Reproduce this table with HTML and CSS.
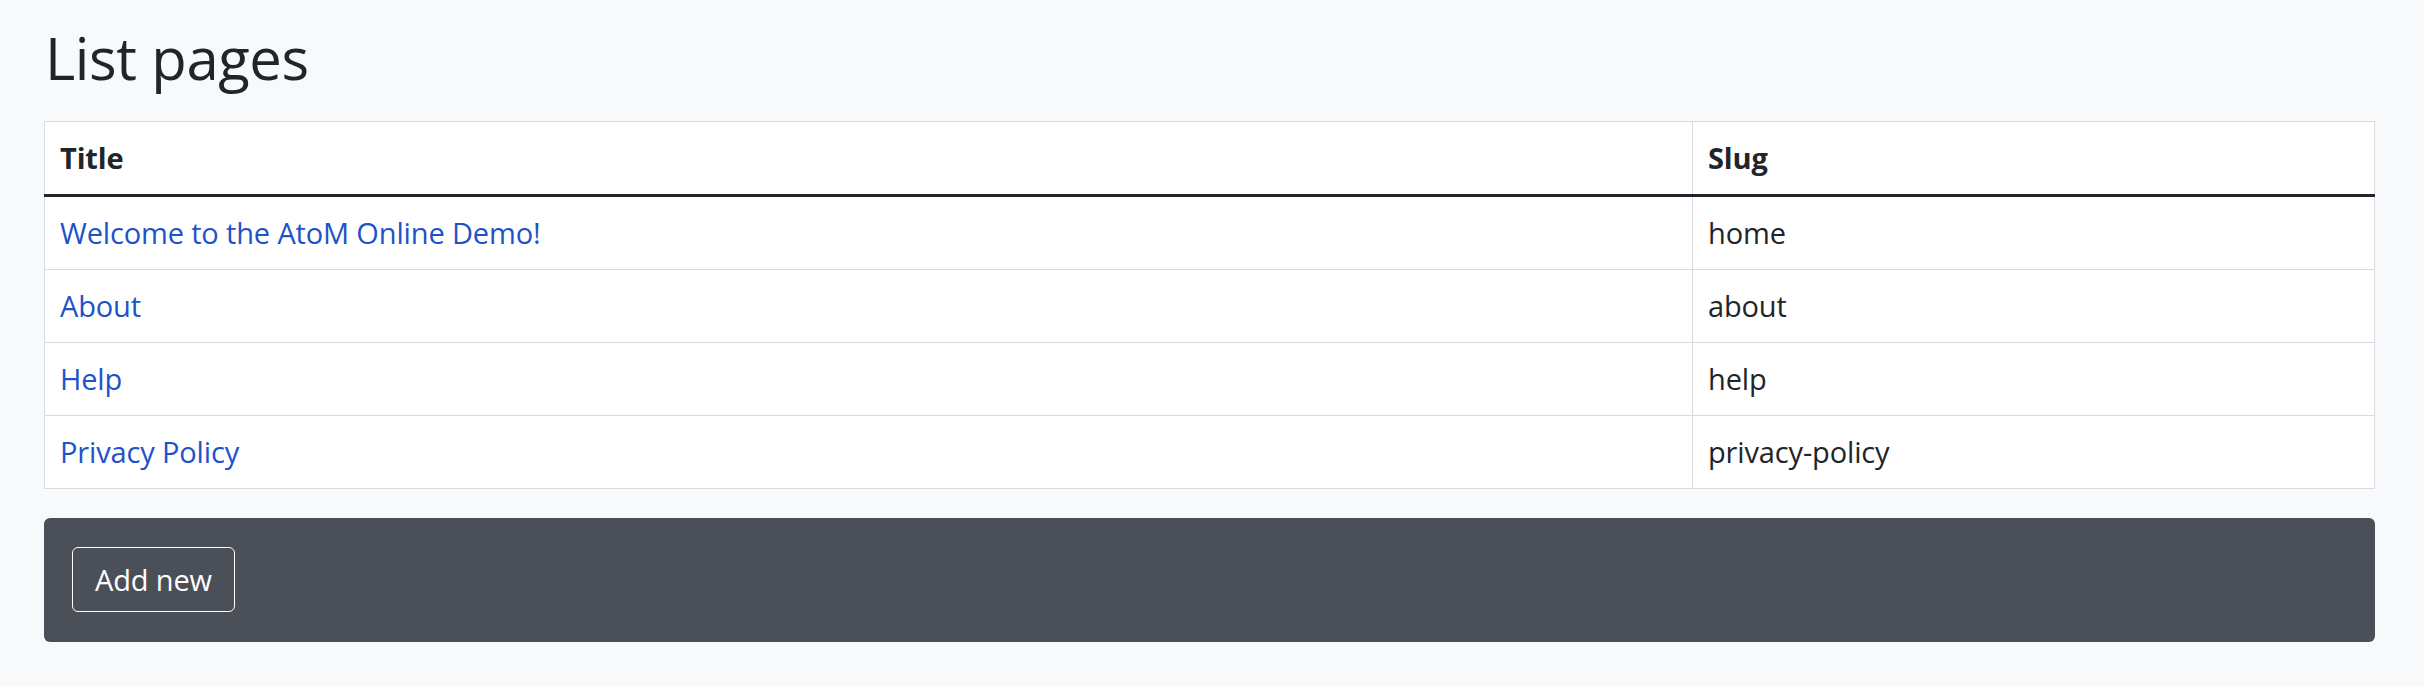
FILE: index.html
```html
<!DOCTYPE html>
<html lang="en">
<head>
<meta charset="utf-8">
<title>List pages</title>
<link rel="stylesheet" href="styles.css">
</head>
<body>
<main class="page">
  <h1 class="page-title">List pages</h1>
  <table class="list-table">
    <colgroup>
      <col class="col-title">
      <col class="col-slug">
    </colgroup>
    <thead>
      <tr><th>Title</th><th>Slug</th></tr>
    </thead>
    <tbody>
      <tr><td><a href="#">Welcome to the AtoM Online Demo!</a></td><td>home</td></tr>
      <tr><td><a href="#">About</a></td><td>about</td></tr>
      <tr><td><a href="#">Help</a></td><td>help</td></tr>
      <tr><td><a href="#">Privacy Policy</a></td><td>privacy-policy</td></tr>
    </tbody>
  </table>
  <section class="actions">
    <a class="btn-outline" href="#">Add new</a>
  </section>
</main>
</body>
</html>
```
FILE: styles.css
```css
html, body {
  margin: 0;
  padding: 0;
}
body {
  background: #f8f9fa;
  color: #212529;
  font-family: "Open Sans", "Liberation Sans", sans-serif;
  font-size: 29px;
  line-height: 44px;
  letter-spacing: -0.15px;
}
.page {
  padding: 22px 49px 40px 44px;
}
.page-title {
  margin: 0 0 27px 1px;
  font-size: 58px;
  font-weight: 500;
  line-height: 72px;
  letter-spacing: -0.4px;
  color: #212529;
}
.list-table {
  width: 100%;
  border-collapse: collapse;
  background: #fff;
  border: 1px solid #d3d6da;
}
.col-title { width: 1648px; }
.list-table th,
.list-table td {
  padding: 14px 15px;
  text-align: left;
  vertical-align: top;
  border: 1px solid #d8dbdf;
}
.list-table th {
  font-weight: 700;
  border-bottom: 3px solid #212529;
}
.list-table a {
  color: #1f52c9;
  text-decoration: none;
}
.actions {
  margin-top: 29px;
  background: #4b4f57;
  border-radius: 6px;
  padding: 29px 28px 30px;
  display: flex;
}
.btn-outline {
  display: inline-block;
  color: #fff;
  text-decoration: none;
  border: 1px solid #fff;
  border-radius: 6px;
  padding: 9.5px 22px;
  line-height: 44px;
}
```
